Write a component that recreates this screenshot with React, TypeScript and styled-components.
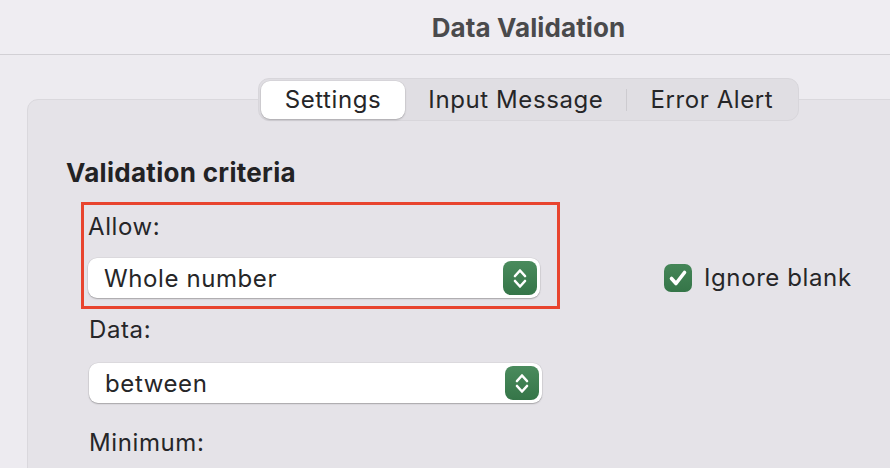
import React from 'react';
import styled, { createGlobalStyle } from 'styled-components';

const GlobalStyle = createGlobalStyle`
  html, body {
    margin: 0;
    padding: 0;
    overflow: hidden;
    background: #edebf0;
  }
  body {
    font-family: Inter, "Noto Sans", "Liberation Sans", sans-serif;
    color: #262628;
    -webkit-font-smoothing: antialiased;
  }
`;

const Window = styled.div`
  width: 1057px;
  height: 468px;
  display: flex;
  flex-direction: column;
  background: #edebf0;
`;

const TitleBar = styled.header`
  height: 54px;
  flex: none;
  display: flex;
  align-items: center;
  justify-content: center;
  background: #efedf2;
  border-bottom: 1px solid #d2d0d5;
`;

const Title = styled.h1`
  margin: 0;
  font-size: 26px;
  font-weight: 700;
  color: #4a4a4c;
  letter-spacing: 0.1px;
`;

const Content = styled.main`
  display: flex;
  flex-direction: column;
  padding-top: 23px;
`;

const TabBar = styled.div`
  position: relative;
  z-index: 1;
  align-self: center;
  height: 43px;
  box-sizing: border-box;
  margin-bottom: -22px;
  padding: 2px;
  display: flex;
  align-items: center;
  background: #e0dee3;
  border: 1px solid #d8d6db;
  border-radius: 11px;
`;

const Tab = styled.button<{ $active?: boolean }>`
  height: 38px;
  padding: 0 ${(p) => (p.$active ? '24px' : '23px')};
  border: none;
  border-radius: 9px;
  font: inherit;
  font-size: 24px;
  letter-spacing: 0.6px;
  color: #262628;
  background: ${(p) => (p.$active ? '#ffffff' : 'transparent')};
  box-shadow: ${(p) => (p.$active ? '0 1px 2px rgba(0,0,0,0.22), 0 0 0 0.5px rgba(0,0,0,0.06)' : 'none')};
`;

const TabDivider = styled.span`
  width: 1px;
  height: 22px;
  background: #cdcbd0;
`;

const Panel = styled.section`
  margin: 0 27px;
  min-height: 480px;
  padding: 57px 38px 0;
  background: #e5e3e8;
  border: 1px solid #dad8dd;
  border-radius: 11px;
`;

const Heading = styled.h2`
  margin: 0;
  font-size: 26px;
  line-height: 32px;
  font-weight: 700;
  letter-spacing: 0.3px;
  color: #222224;
`;

const Row = styled.div`
  display: flex;
  align-items: flex-end;
  margin-top: 13px;
  margin-left: 15px;
`;

const Highlight = styled.div`
  width: 479px;
  box-sizing: border-box;
  border: 3px solid #e8442e;
  padding: 7px 17px 8px 4px;
`;

const Field = styled.div`
  margin-left: 23px;
`;

const Label = styled.div<{ $gap?: number }>`
  font-size: 24px;
  line-height: 30px;
  letter-spacing: 0.6px;
  margin-top: ${(p) => p.$gap ?? 0}px;
`;

const Popup = styled.div<{ $width: number; $gap: number }>`
  width: ${(p) => p.$width}px;
  height: 40px;
  box-sizing: border-box;
  margin-top: ${(p) => p.$gap}px;
  padding: 0 3px 0 16px;
  display: flex;
  align-items: center;
  justify-content: space-between;
  background: #ffffff;
  border-radius: 9px;
  box-shadow: 0 1px 1.5px rgba(0,0,0,0.25), 0 0 0 0.5px rgba(0,0,0,0.08);
  font-size: 24px;
  letter-spacing: 0.6px;
`;

const Stepper = styled.span`
  width: 34px;
  height: 34px;
  display: flex;
  align-items: center;
  justify-content: center;
  border-radius: 8px;
  background: linear-gradient(#4a8b5d, #357548);
`;

const CheckRow = styled.label`
  display: flex;
  align-items: center;
  gap: 12px;
  margin: 0 0 17px 104px;
  font-size: 24px;
  letter-spacing: 0.6px;
  white-space: nowrap;
`;

const CheckBox = styled.span`
  width: 28px;
  height: 28px;
  flex: none;
  display: flex;
  align-items: center;
  justify-content: center;
  border-radius: 7px;
  background: linear-gradient(#458658, #357548);
`;

const Chevrons = () => (
  <svg width="34" height="34" viewBox="0 0 34 34" fill="none" stroke="#fff" strokeWidth="2.6" strokeLinecap="round" strokeLinejoin="round">
    <path d="M12 15 L17 9.5 L22 15" />
    <path d="M12 20 L17 25.5 L22 20" />
  </svg>
);

const Check = () => (
  <svg width="28" height="28" viewBox="0 0 28 28" fill="none" stroke="#fff" strokeWidth="3.6" strokeLinecap="round" strokeLinejoin="round">
    <path d="M7.5 14.5 L12 19.5 L20.5 8.5" />
  </svg>
);

const Select = ({ value, width, gap }: { value: string; width: number; gap: number }) => (
  <Popup $width={width} $gap={gap}>
    <span>{value}</span>
    <Stepper>
      <Chevrons />
    </Stepper>
  </Popup>
);

export default function App() {
  return (
    <>
      <GlobalStyle />
      <Window>
        <TitleBar>
          <Title>Data Validation</Title>
        </TitleBar>
        <Content>
          <TabBar>
            <Tab $active>Settings</Tab>
            <Tab>Input Message</Tab>
            <TabDivider />
            <Tab>Error Alert</Tab>
          </TabBar>
          <Panel>
            <Heading>Validation criteria</Heading>
            <Row>
              <Highlight>
                <Label>Allow:</Label>
                <Select value="Whole number" width={452} gap={16} />
              </Highlight>
              <CheckRow>
                <CheckBox>
                  <Check />
                </CheckBox>
                Ignore blank
              </CheckRow>
            </Row>
            <Field>
              <Label $gap={6}>Data:</Label>
              <Select value="between" width={453} gap={18} />
              <Label $gap={25}>Minimum:</Label>
            </Field>
          </Panel>
        </Content>
      </Window>
    </>
  );
}
